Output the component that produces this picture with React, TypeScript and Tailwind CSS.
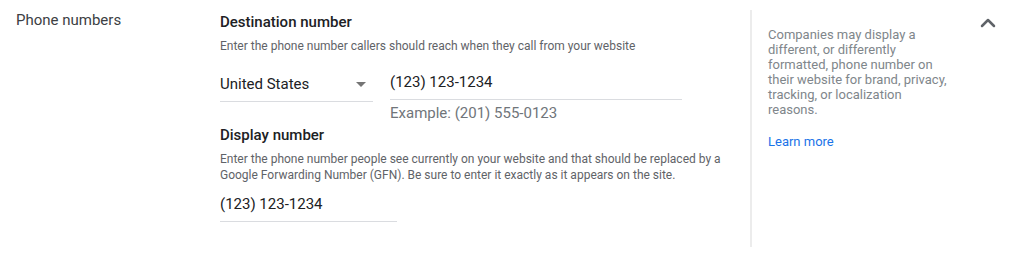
import { ChevronUp } from 'lucide-react'

export default function App() {
  return (
    <div className="flex h-[257px] w-[1024px] bg-white font-['Roboto',sans-serif] text-[#202124]">
      {/* Label */}
      <div className="w-[220px] shrink-0 pl-4 pt-[10px] text-[15px] leading-5 text-[#3c4043]">
        Phone numbers
      </div>

      {/* Form */}
      <div className="w-[530px] shrink-0 pt-3 pr-6">
        <h3 className="text-[15px] font-medium leading-5">Destination number</h3>
        <p className="mt-[6px] text-xs leading-4 text-[#5f6368]">
          Enter the phone number callers should reach when they call from your website
        </p>

        <div className="mt-[18px] flex items-start gap-[17px]">
          <div className="flex w-[153px] items-center justify-between border-b border-[#dadce0] pb-[7px] pt-[2px]">
            <span className="text-[15px] leading-5">United States</span>
            <span className="mr-[7px] h-0 w-0 border-x-[5px] border-t-[5px] border-x-transparent border-t-[#757575]" />
          </div>
          <div className="w-[292px]">
            <div className="border-b border-[#dadce0] pb-[7px] text-[15px] leading-5">(123) 123-1234</div>
            <div className="mt-[3px] text-[15px] leading-5 text-[#70757a]">Example: (201) 555-0123</div>
          </div>
        </div>

        <h3 className="mt-[2px] text-[15px] font-medium leading-5">Display number</h3>
        <p className="mt-[6px] text-xs leading-4 text-[#5f6368]">
          Enter the phone number people see currently on your website and that should be replaced by a
          Google Forwarding Number (GFN). Be sure to enter it exactly as it appears on the site.
        </p>
        <div className="mt-[11px] w-[177px] border-b border-[#dadce0] pb-[7px] text-[15px] leading-5">
          (123) 123-1234
        </div>
      </div>

      {/* Help panel */}
      <div className="mt-[10px] mb-[10px] flex flex-1 border-l-2 border-[#ececec] pl-[16px] pr-[24px]">
        <div className="w-[184px] pt-[17px]">
          <p className="text-[13px] leading-[15px] text-[#80868b]">
            Companies may display a different, or differently formatted, phone number on their
            website for brand, privacy, tracking, or localization reasons.
          </p>
          <a href="#" className="mt-[17px] block text-[13px] leading-[15px] text-[#1a73e8]">
            Learn more
          </a>
        </div>
        <div className="ml-auto pt-[1px]">
          <ChevronUp className="h-6 w-6 text-[#5f6368]" strokeWidth={2.5} />
        </div>
      </div>
    </div>
  )
}
